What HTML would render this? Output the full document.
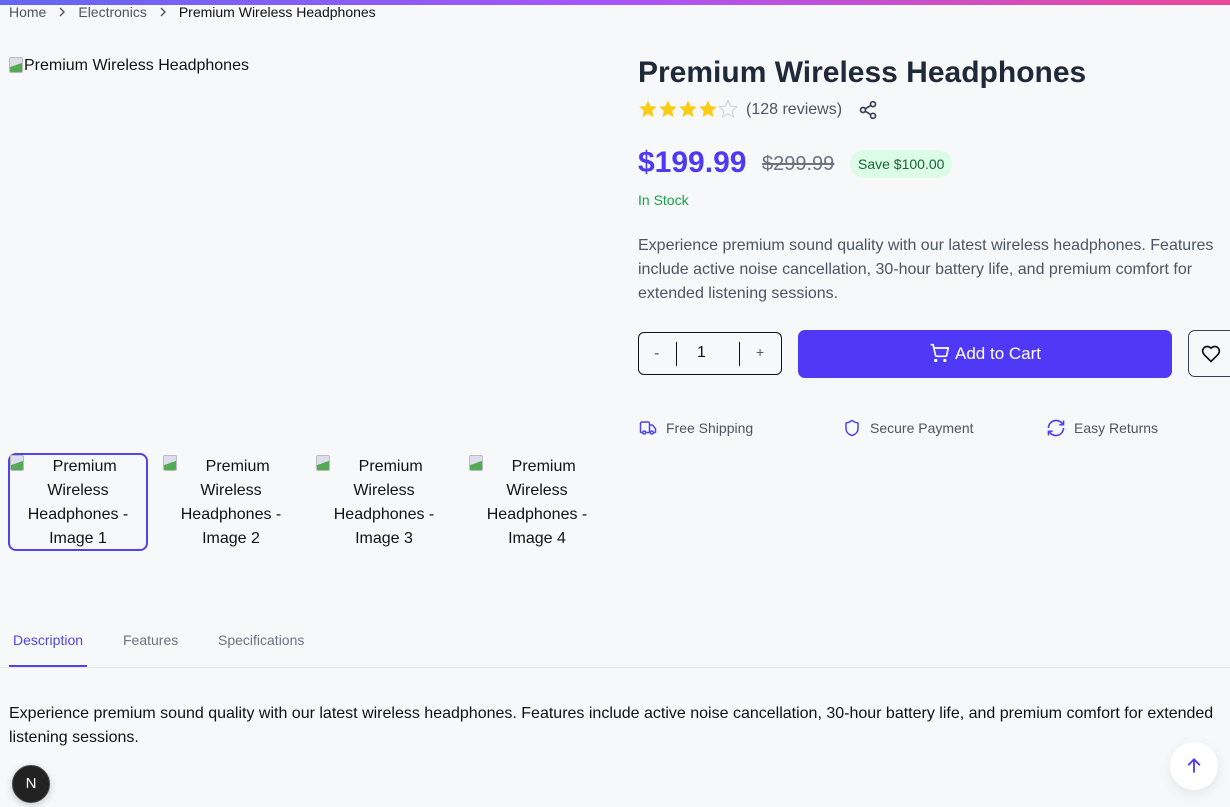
<!DOCTYPE html>
<html><head><meta charset="utf-8"><style>
*{box-sizing:border-box;margin:0;padding:0}
body{width:1230px;height:807px;overflow:hidden;background:#f7f8fa;font-family:"Liberation Sans",sans-serif;color:#111;position:relative}
.bar{position:absolute;top:0;left:0;width:1230px;height:5px;background:linear-gradient(90deg,#6366f1,#a855f7,#ec4899)}
.abs{position:absolute}
.bc{top:4px;left:9px;font-size:14px;color:#4b5563;white-space:nowrap}
.bc svg{margin:0 11px;vertical-align:-1px}
.thumb{position:absolute;top:453px;width:140px;height:98px;font-size:16px;line-height:24px;text-align:center;padding-top:0;color:#111}
.thumb.sel{border:2px solid #4f46e5;border-radius:8px}
.ic{display:inline-block;width:14px;height:16px;vertical-align:top;border:1px solid #bbb;border-radius:2px;background:linear-gradient(160deg,#dde 50%,#5a5 50%);margin-right:1px}
</style></head><body>
<div class="bar"></div>
<div class="abs bc">Home<svg width="10" height="12" viewBox="0 0 10 12" fill="none" stroke="#4b5563" stroke-width="1.4"><path d="M3 2l4 4-4 4"/></svg>Electronics<svg width="10" height="12" viewBox="0 0 10 12" fill="none" stroke="#4b5563" stroke-width="1.4"><path d="M3 2l4 4-4 4"/></svg><b style="font-weight:normal;color:#111">Premium Wireless Headphones</b></div>
<div class="abs" style="top:57px;left:9px;font-size:16px;"><i class="ic"></i>Premium Wireless Headphones</div>

<div class="thumb sel" style="left:8px"><div style="position:absolute;left:0;top:0"><i class="ic"></i></div>&nbsp;&nbsp;&nbsp;Premium<br>Wireless<br>Headphones -<br>Image 1</div>
<div class="thumb" style="left:161px;padding-top:2px"><div style="position:absolute;left:2px;top:2px"><i class="ic"></i></div>&nbsp;&nbsp;&nbsp;Premium<br>Wireless<br>Headphones -<br>Image 2</div>
<div class="thumb" style="left:314px;padding-top:2px"><div style="position:absolute;left:2px;top:2px"><i class="ic"></i></div>&nbsp;&nbsp;&nbsp;Premium<br>Wireless<br>Headphones -<br>Image 3</div>
<div class="thumb" style="left:467px;padding-top:2px"><div style="position:absolute;left:2px;top:2px"><i class="ic"></i></div>&nbsp;&nbsp;&nbsp;Premium<br>Wireless<br>Headphones -<br>Image 4</div>

<div class="abs" style="left:638px;top:56px;font-size:30px;font-weight:bold;color:#1f2937">Premium Wireless Headphones</div>
<div class="abs" style="left:638px;top:99px;">
<svg width="100" height="22" viewBox="0 0 100 22">
<g fill="#facc15"><path id="s" d="M10 1.5l2.6 5.6 6.1.7-4.5 4.2 1.2 6-5.4-3-5.4 3 1.2-6L1.3 7.8l6.1-.7z"/></g>
<use href="#s" x="20" fill="#facc15"/><use href="#s" x="40" fill="#facc15"/><use href="#s" x="60" fill="#facc15"/>
<path d="M90 1.5l2.6 5.6 6.1.7-4.5 4.2 1.2 6-5.4-3-5.4 3 1.2-6-4.5-4.2 6.1-.7z" fill="none" stroke="#d1d5db" stroke-width="1.2"/>
</svg></div>
<div class="abs" style="left:746px;top:101px;font-size:16px;color:#4b5563">(128 reviews)</div>
<svg class="abs" style="left:858px;top:100px" width="20" height="20" viewBox="0 0 24 24" fill="none" stroke="#374151" stroke-width="2"><circle cx="18" cy="5" r="3"/><circle cx="6" cy="12" r="3"/><circle cx="18" cy="19" r="3"/><path d="M8.6 13.5l6.8 4M15.4 6.5l-6.8 4"/></svg>
<div class="abs" style="left:638px;top:146px;font-size:30px;font-weight:bold;color:#4f39f6">$199.99</div>
<div class="abs" style="left:762px;top:153px;font-size:20px;color:#6b7280;text-decoration:line-through">$299.99</div>
<div class="abs" style="left:850px;top:150px;height:28px;padding:0 8px;line-height:28px;border-radius:14px;background:#dcfce7;color:#166534;font-size:14px">Save $100.00</div>
<div class="abs" style="left:638px;top:192px;font-size:14px;color:#16a34a">In Stock</div>
<div class="abs" style="left:638px;top:234px;width:590px;font-size:16px;line-height:24px;color:#4b5563">Experience premium sound quality with our latest wireless headphones. Features include active noise cancellation, 30-hour battery life, and premium comfort for extended listening sessions.</div>

<div class="abs" style="left:638px;top:332px;width:144px;height:43px;border:1px solid #111;border-radius:6px;font-size:16px">
<span class="abs" style="left:15px;top:12px;color:#555">-</span>
<span class="abs" style="left:37px;top:9px;width:1px;height:24px;background:#111"></span>
<span class="abs" style="left:58px;top:11px">1</span>
<span class="abs" style="left:100px;top:9px;width:1px;height:24px;background:#111"></span>
<span class="abs" style="left:117px;top:11px;color:#555;font-size:14px">+</span>
</div>
<div class="abs" style="left:798px;top:330px;width:374px;height:48px;border-radius:7px;background:#4f39f6;color:#fff;font-size:17px;line-height:48px;text-align:center">
<svg style="vertical-align:-4px;margin-right:6px" width="20" height="20" viewBox="0 0 24 24" fill="none" stroke="#fff" stroke-width="2"><circle cx="8" cy="21" r="1"/><circle cx="19" cy="21" r="1"/><path d="M2 2h3l2.7 12.4a2 2 0 0 0 2 1.6h9.7a2 2 0 0 0 2-1.6L23 6H6"/></svg>Add to Cart</div>
<div class="abs" style="left:1188px;top:330px;width:50px;height:47px;border:1px solid #374151;border-radius:7px">
<svg class="abs" style="left:12px;top:13px" width="20" height="20" viewBox="0 0 24 24" fill="none" stroke="#111" stroke-width="2"><path d="M19 14c1.5-1.5 3-3.2 3-5.5A5.5 5.5 0 0 0 16.5 3c-1.8 0-3 .5-4.5 2-1.5-1.5-2.7-2-4.5-2A5.5 5.5 0 0 0 2 8.5c0 2.3 1.5 4 3 5.5l7 7z"/></svg></div>

<svg class="abs" style="left:638px;top:419px" width="20" height="18" viewBox="0 0 24 24" fill="none" stroke="#4f46e5" stroke-width="2"><path d="M14 18V6a2 2 0 0 0-2-2H4a2 2 0 0 0-2 2v11a1 1 0 0 0 1 1h2M15 18H9M19 18h2a1 1 0 0 0 1-1v-3.6a1 1 0 0 0-.2-.6l-3.5-4.4A1 1 0 0 0 17.5 8H14"/><circle cx="17" cy="18" r="2"/><circle cx="7" cy="18" r="2"/></svg>
<div class="abs" style="left:666px;top:420px;font-size:14px;color:#4b5563">Free Shipping</div>
<svg class="abs" style="left:843px;top:418px" width="18" height="20" viewBox="0 0 24 24" fill="none" stroke="#4f46e5" stroke-width="2"><path d="M20 13c0 5-3.5 7.5-7.7 9a1 1 0 0 1-.7 0C7.5 20.5 4 18 4 13V6a1 1 0 0 1 1-1c2 0 4.5-1.2 6.2-2.7a1.2 1.2 0 0 1 1.5 0C14.5 3.8 17 5 19 5a1 1 0 0 1 1 1z"/></svg>
<div class="abs" style="left:870px;top:420px;font-size:14px;color:#4b5563">Secure Payment</div>
<svg class="abs" style="left:1046px;top:418px" width="20" height="20" viewBox="0 0 24 24" fill="none" stroke="#4f46e5" stroke-width="2"><path d="M3 12a9 9 0 0 1 9-9 9.75 9.75 0 0 1 6.7 2.7L21 8M21 3v5h-5M21 12a9 9 0 0 1-9 9 9.75 9.75 0 0 1-6.7-2.7L3 16M8 16H3v5"/></svg>
<div class="abs" style="left:1074px;top:420px;font-size:14px;color:#4b5563">Easy Returns</div>

<div class="abs" style="left:13px;top:632px;font-size:14px;color:#4f46e5">Description</div>
<div class="abs" style="left:123px;top:632px;font-size:14px;color:#6b7280">Features</div>
<div class="abs" style="left:218px;top:632px;font-size:14px;color:#6b7280">Specifications</div>
<div class="abs" style="left:0;top:667px;width:1230px;height:1px;background:#e5e7eb"></div>
<div class="abs" style="left:9px;top:665px;width:78px;height:2px;background:#4f46e5"></div>
<div class="abs" style="left:9px;top:702px;width:1215px;font-size:16px;line-height:24px;color:#111">Experience premium sound quality with our latest wireless headphones. Features include active noise cancellation, 30-hour battery life, and premium comfort for extended listening sessions.</div>

<div class="abs" style="left:12px;top:765px;width:38px;height:38px;border-radius:50%;background:#222;border:1px solid #444;color:#fff;font-size:15px;line-height:36px;text-align:center;box-shadow:0 2px 8px rgba(0,0,0,.2)">N</div>
<div class="abs" style="left:1170px;top:742px;width:48px;height:48px;border-radius:50%;background:#fff;box-shadow:0 4px 12px rgba(0,0,0,.08)">
<svg class="abs" style="left:14px;top:14px" width="20" height="20" viewBox="0 0 24 24" fill="none" stroke="#4f39f6" stroke-width="2.2"><path d="M12 20V4M5 11l7-7 7 7"/></svg></div>
</body></html>
